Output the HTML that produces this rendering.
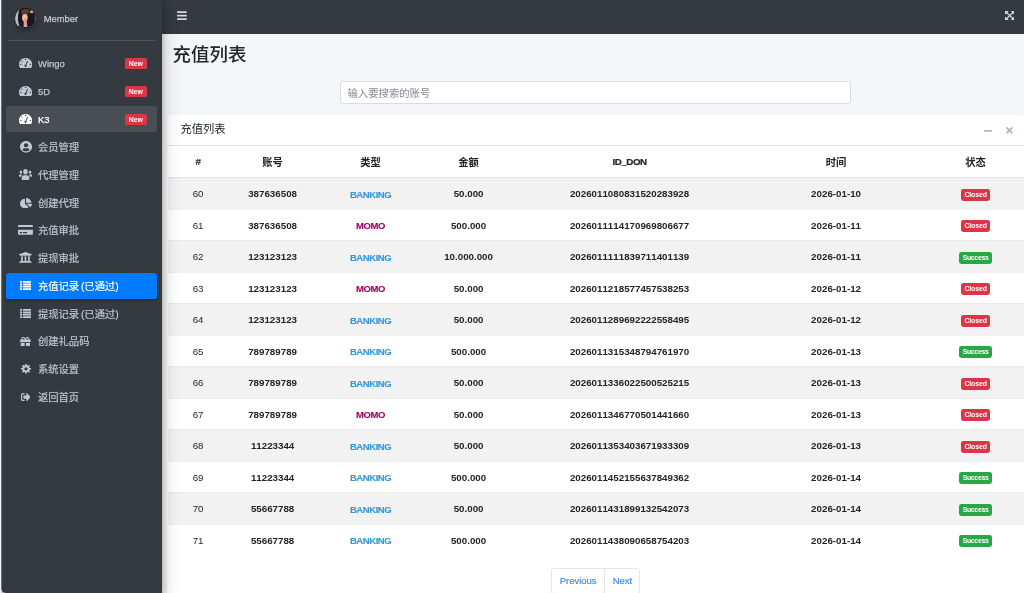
<!DOCTYPE html>
<html lang="zh">
<head>
<meta charset="utf-8">
<title>充值列表</title>
<style>
*{box-sizing:border-box}
html,body{margin:0;padding:0}
body{will-change:transform;width:1024px;height:593px;overflow:hidden;position:relative;background:#f4f6f9;
 font-family:"Liberation Sans","Noto Sans CJK SC",sans-serif;font-size:9.6px;color:#212529;line-height:1.5}
.cjk{font-size:10.3px}
/* window edge */
.edge{position:absolute;left:0;top:0;width:1px;height:593px;background:#f1f3f6;z-index:6}
.edge:after{content:"";position:absolute;left:1px;top:0;width:1px;height:593px;background:rgba(241,243,246,.3)}
/* sidebar */
.sidebar{position:absolute;left:1.4px;top:-2.7px;width:160.5px;height:595.7px;background:#343a40;z-index:5;
 border-bottom-left-radius:5px;box-shadow:0 9px 18px rgba(0,0,0,.25),0 6px 6px rgba(0,0,0,.22)}
.user{position:absolute;left:6.6px;right:5.8px;top:0;height:43.6px;border-bottom:.8px solid #4b545c}
.avatar{position:absolute;left:6.6px;top:10.5px;width:21.5px;height:21.5px;border-radius:50%;overflow:hidden;
 box-shadow:0 2px 4px rgba(0,0,0,.3)}
.user .name{position:absolute;left:35.8px;top:13.7px;font-size:9.4px;color:#c2c7d0;line-height:15px;-webkit-text-stroke:.25px currentColor}
.nav{position:absolute;left:5px;right:5px;top:53.6px;margin:0;padding:0;list-style:none}
.nav li{position:relative;height:26px;margin-bottom:1.75px;border-radius:2.6px;color:#c2c7d0;
 font-size:10.3px;line-height:25.7px;white-space:nowrap}
.nav li .t.ws{word-spacing:-1.1px}
.nav li.open{background:rgba(255,255,255,.1);color:#fff}
.nav li.active{background:#007bff;color:#fff;box-shadow:0 1px 3px rgba(0,0,0,.12),0 1px 2px rgba(0,0,0,.24)}
.nav li svg{position:absolute;fill:currentColor}
.nav li .t{position:absolute;left:31.6px;top:1px;-webkit-text-stroke:.18px currentColor}
.nav li .t.lat{font-size:9.45px;top:.2px;-webkit-text-stroke:.25px currentColor}
.nav li .b{position:absolute;right:10.3px;top:7.2px;height:11.4px;line-height:11.4px;width:21.5px;text-align:center;
 background:#dc3545;color:#fff;font-weight:bold;font-size:6.9px;border-radius:1.8px}
/* navbar */
.navbar{position:absolute;left:162px;top:-2.7px;right:0;height:36.6px;background:#343a40;z-index:2}
.navbar svg{position:absolute;fill:#d6d8da}
/* content */
h1{position:absolute;left:172.6px;top:40.7px;margin:0;font-size:18.45px;font-weight:500;line-height:27px;color:#212529;white-space:nowrap}
.search{position:absolute;left:340px;top:81px;width:511px;height:23px;background:#fff;border:1px solid #d8dce1;border-radius:2.6px;
 padding:0 6.5px;font-size:10.35px;line-height:23.6px;color:#858b91;white-space:nowrap}
.card{position:absolute;left:167px;top:115px;width:857.6px;height:500px;background:#fff;border-radius:2.6px 2.6px 0 0;
 box-shadow:0 0 1px rgba(0,0,0,.09),0 1px 2px rgba(0,0,0,.12)}
.card-h{position:relative;height:31px;border-bottom:1px solid #e3e5e8}
.card-h .ttl{position:absolute;left:13.4px;top:-.7px;line-height:30px;font-size:11.25px;color:#212529}
.card-h svg{position:absolute;fill:#b2b9c0}
table{border-collapse:collapse;table-layout:fixed;width:857.2px;margin-left:1px;text-align:center}
th,td{padding:0;overflow:hidden;white-space:nowrap;font-kerning:none}
thead th{height:31.6px;border-bottom:1px solid #dfe3e7;font-weight:bold;font-size:10.3px;color:#212529;padding-top:3px}
thead th.lat{font-size:9.8px;padding-top:2.1px;letter-spacing:-.45px;-webkit-text-stroke:.2px currentColor}
tbody td{height:31.51px;border-top:1px solid #e9ebec;font-weight:bold;font-size:9.75px;color:#212529;padding-top:2.8px}
tbody tr:nth-child(even) td{border-top-color:#eeeff0}
tbody tr:nth-child(odd){background:#f2f2f2}
tbody td.n{font-weight:normal;font-size:9.7px}
tbody td.bk,tbody td.mm{font-size:9.5px;letter-spacing:-.42px;-webkit-text-stroke:.12px currentColor}
.bk{color:#3498db}
.mm{color:#a50064}
.bd{display:inline-block;vertical-align:middle;height:12px;line-height:12px;padding:0;border-radius:2.4px;color:#fff;font-size:6.9px;font-weight:bold;position:relative;top:-.3px;text-align:center}
.bd.c{background:#dc3545;width:29.3px;letter-spacing:-.1px}
.bd.s{background:#28a745;width:33.1px;letter-spacing:-.3px}
.pg{position:absolute;left:551.4px;top:568px;height:26px;width:88.4px;background:#fff;border:1px solid #e4e7ea;border-radius:2.6px;z-index:3;
 font-size:9.5px;color:#3f8fe0;line-height:24px;-webkit-text-stroke:.2px currentColor}
.pg span{position:absolute;top:0;text-align:center}
.pg .p{left:0;width:52.5px;border-right:1px solid #e4e7ea;height:24px}
.pg .x{left:53px;width:34px;letter-spacing:-.1px}
</style>
</head>
<body>
<div class="edge"></div>

<div class="navbar">
 <svg style="left:15.2px;top:13.6px" width="9.8" height="9.2" viewBox="0 0 448 420"><path d="M16 40h416c9 0 16-7 16-16V-16c0-9-7-16-16-16H16C7-32 0-25 0-16v40c0 9 7 16 16 16zm0 160h416c9 0 16-7 16-16v-40c0-9-7-16-16-16H16c-9 0-16 7-16 16v40c0 9 7 16 16 16zm0 160h416c9 0 16-7 16-16v-40c0-9-7-16-16-16H16c-9 0-16 7-16 16v40c0 9 7 16 16 16z" transform="translate(0,46)"/></svg>
 <svg style="right:9.9px;top:13.5px" width="9.6" height="9.2" viewBox="0 0 448 448" preserveAspectRatio="none"><path d="M448 312v112c0 13-11 24-24 24H312c-21 0-32-26-17-41l36-36-107-107-107 107 36 36c15 15 4 41-17 41H24c-13 0-24-11-24-24V312c0-21 26-32 41-17l36 36 107-107L77 117l-36 36c-15 15-41 4-41-17V24C0 11 11 0 24 0h112c21 0 32 26 17 41l-36 36 107 107L331 77l-36-36c-15-15-4-41 17-41h112c13 0 24 11 24 24v112c0 21-26 32-41 17l-36-36-107 107 107 107 36-36c15-15 41-4 41 17z"/></svg>
</div>

<div class="sidebar">
 <div class="user">
  <div class="avatar"><svg width="21.5" height="21.5" viewBox="0 0 100 100"><defs><filter id="bl" x="-10%" y="-10%" width="120%" height="120%"><feGaussianBlur stdDeviation="3.6"/></filter></defs><rect width="100" height="100" fill="#1c1718"/><g filter="url(#bl)"><rect x="-10" y="-10" width="120" height="120" fill="#1c1718"/><path d="M-5 -5h30C12 25 10 60 22 85L-5 105z" fill="#b8bbb6"/><rect x="92" y="-5" width="15" height="70" fill="#5d6163"/><path d="M28 12C40 2 60 2 68 10L60 30 32 32z" fill="#5a3d30"/><ellipse cx="46" cy="45" rx="13" ry="17" fill="#ecbcae"/><path d="M40 58h14l4 30H40z" fill="#d9a092"/><ellipse cx="48" cy="53" rx="4" ry="2.5" fill="#c8606c"/><ellipse cx="78" cy="17" rx="9" ry="7" fill="#cf9aa2"/><path d="M5 84C30 80 40 94 50 94 66 94 82 78 96 62L105 105H-5z" fill="#1d3a84"/></g></svg></div>
  <div class="name">Member</div>
 </div>
 <ul class="nav" id="nav">
 <li><svg style="left:12.60px;top:7.55px" width="13.2" height="10.0" viewBox="0 32 576 448" preserveAspectRatio="none"><path fill-rule="evenodd" d="M288 32C129 32 0 161 0 320c0 52.800 14.300 102.300 39.100 144.800 5.600 9.600 16.300 15.200 27.400 15.200h443c11.100 0 21.800-5.600 27.400-15.200C561.800 422.300 576 372.800 576 320c0-159-129-288-288-288zM258 96a30 30 0 1 0 60 0a30 30 0 1 0 -60 0zM98 170a30 30 0 1 0 60 0a30 30 0 1 0 -60 0zM50 320a30 30 0 1 0 60 0a30 30 0 1 0 -60 0zM466 320a30 30 0 1 0 60 0a30 30 0 1 0 -60 0zM236 380a52 52 0 1 0 104 0a52 52 0 1 0 -104 0zM352 150l40 14-62 190-40-14z"/></svg><span class="t lat">Wingo</span><span class="b">New</span></li>
 <li><svg style="left:12.60px;top:7.55px" width="13.2" height="10.0" viewBox="0 32 576 448" preserveAspectRatio="none"><path fill-rule="evenodd" d="M288 32C129 32 0 161 0 320c0 52.800 14.300 102.300 39.100 144.800 5.600 9.600 16.300 15.200 27.400 15.200h443c11.100 0 21.800-5.600 27.400-15.200C561.800 422.300 576 372.800 576 320c0-159-129-288-288-288zM258 96a30 30 0 1 0 60 0a30 30 0 1 0 -60 0zM98 170a30 30 0 1 0 60 0a30 30 0 1 0 -60 0zM50 320a30 30 0 1 0 60 0a30 30 0 1 0 -60 0zM466 320a30 30 0 1 0 60 0a30 30 0 1 0 -60 0zM236 380a52 52 0 1 0 104 0a52 52 0 1 0 -104 0zM352 150l40 14-62 190-40-14z"/></svg><span class="t lat">5D</span><span class="b">New</span></li>
 <li class="open"><svg style="left:12.60px;top:7.55px" width="13.2" height="10.0" viewBox="0 32 576 448" preserveAspectRatio="none"><path fill-rule="evenodd" d="M288 32C129 32 0 161 0 320c0 52.800 14.300 102.300 39.100 144.800 5.600 9.600 16.300 15.200 27.400 15.200h443c11.100 0 21.800-5.600 27.400-15.200C561.800 422.300 576 372.800 576 320c0-159-129-288-288-288zM258 96a30 30 0 1 0 60 0a30 30 0 1 0 -60 0zM98 170a30 30 0 1 0 60 0a30 30 0 1 0 -60 0zM50 320a30 30 0 1 0 60 0a30 30 0 1 0 -60 0zM466 320a30 30 0 1 0 60 0a30 30 0 1 0 -60 0zM236 380a52 52 0 1 0 104 0a52 52 0 1 0 -104 0zM352 150l40 14-62 190-40-14z"/></svg><span class="t lat">K3</span><span class="b">New</span></li>
 <li><svg style="left:13.15px;top:7.05px" width="12.1" height="11.6" viewBox="0 8 496 496" preserveAspectRatio="none"><path fill-rule="evenodd" d="M248 8C111 8 0 119 0 256s111 248 248 248 248-111 248-248S385 8 248 8zM248 104a88 88 0 1 0 0 176 88 88 0 1 0 0-176zM248 448c-58 0-111-26-146-68 19-35 55-60 98-60 2 0 5 0 7 1 13 4 27 7 41 7s28-3 41-7c2-1 5-1 7-1 43 0 79 25 98 60-35 42-88 68-146 68z"/></svg><span class="t">会员管理</span></li>
 <li><svg style="left:12.70px;top:7.05px" width="13.0" height="10.9" viewBox="0 32 640 448" preserveAspectRatio="none"><path fill-rule="evenodd" d="M32 160a64 64 0 1 0 128 0a64 64 0 1 0 -128 0zM480 160a64 64 0 1 0 128 0a64 64 0 1 0 -128 0zM32 256h128c-30 22-48 58-48 96H32c-18 0-32-14-32-32v-32c0-18 14-32 32-32zM608 256H480c30 22 48 58 48 96h80c18 0 32-14 32-32v-32c0-18-14-32-32-32zM208 144a112 112 0 1 0 224 0a112 112 0 1 0 -224 0zM243 288h154c64 0 115 51 115 115v29c0 26-22 48-48 48H176c-26 0-48-22-48-48v-29c0-64 51-115 115-115z"/></svg><span class="t">代理管理</span></li>
 <li><svg style="left:13.15px;top:8.00px" width="12.1" height="10.3" viewBox="0 0 544 512" preserveAspectRatio="none"><path fill-rule="evenodd" d="M527.800 288H290.500l158 158c6 6 16 6.500 22.200.700 38.700-36.500 65.300-85.600 73.100-140.900C545.200 296.400 537.400 288 527.800 288zM512 223.200C503.700 103.700 408.300 8.300 288.800 0 279.700-.600 272 7.100 272 16.200V240h223.800c9.100 0 16.800-7.700 16.200-16.800zM224 288V50.700c0-9.600-8.400-17.400-17.800-16C87 51.500-4.100 155.600.100 280.400 4.500 408.500 114.800 513.600 243 512c50.400-.600 97-16.900 135.300-44 7.900-5.600 8.400-17.200 1.600-24L224 288z"/></svg><span class="t">创建代理</span></li>
 <li><svg style="left:11.75px;top:7.75px" width="14.9" height="9.7" viewBox="0 32 576 448" preserveAspectRatio="none"><path fill-rule="evenodd" d="M0 432c0 26.500 21.500 48 48 48h480c26.500 0 48-21.500 48-48V256H0v176zm192-68c0-6.600 5.400-12 12-12h136c6.600 0 12 5.400 12 12v40c0 6.600-5.400 12-12 12H204c-6.600 0-12-5.400-12-12v-40zm-128 0c0-6.600 5.400-12 12-12h72c6.600 0 12 5.400 12 12v40c0 6.600-5.400 12-12 12H76c-6.600 0-12-5.400-12-12v-40zM576 80v48H0V80c0-26.500 21.500-48 48-48h480c26.500 0 48 21.500 48 48z"/></svg><span class="t">充值审批</span></li>
 <li><svg style="left:12.75px;top:6.55px" width="12.9" height="11.6" viewBox="16 32 480 448" preserveAspectRatio="none"><path fill-rule="evenodd" d="M496 128v16a8 8 0 0 1-8 8h-24v12c0 6.600-5.400 12-12 12H60c-6.600 0-12-5.400-12-12v-12H24a8 8 0 0 1-8-8v-16a8 8 0 0 1 4.900-7.400l232-88a8 8 0 0 1 6.200 0l232 88A8 8 0 0 1 496 128zM472 432H40c-13.300 0-24 10.700-24 24v16a8 8 0 0 0 8 8h464a8 8 0 0 0 8-8v-16c0-13.300-10.700-24-24-24zM96 192v192H60c-6.600 0-12 5.400-12 12v20h416v-20c0-6.600-5.400-12-12-12h-36V192h-64v192h-64V192h-64v192h-64V192H96z"/></svg><span class="t">提现审批</span></li>
 <li class="active"><svg style="left:13.60px;top:7.85px" width="11.2" height="9.0" viewBox="0 0 512 416" preserveAspectRatio="none"><path fill-rule="evenodd" d="M10 0h80a10 10 0 0 1 10 10v60a10 10 0 0 1 -10 10h-80a10 10 0 0 1 -10 -10v-60a10 10 0 0 1 10 -10zM146 0h356a10 10 0 0 1 10 10v60a10 10 0 0 1 -10 10h-356a10 10 0 0 1 -10 -10v-60a10 10 0 0 1 10 -10zM10 112h80a10 10 0 0 1 10 10v60a10 10 0 0 1 -10 10h-80a10 10 0 0 1 -10 -10v-60a10 10 0 0 1 10 -10zM146 112h356a10 10 0 0 1 10 10v60a10 10 0 0 1 -10 10h-356a10 10 0 0 1 -10 -10v-60a10 10 0 0 1 10 -10zM10 224h80a10 10 0 0 1 10 10v60a10 10 0 0 1 -10 10h-80a10 10 0 0 1 -10 -10v-60a10 10 0 0 1 10 -10zM146 224h356a10 10 0 0 1 10 10v60a10 10 0 0 1 -10 10h-356a10 10 0 0 1 -10 -10v-60a10 10 0 0 1 10 -10zM10 336h80a10 10 0 0 1 10 10v60a10 10 0 0 1 -10 10h-80a10 10 0 0 1 -10 -10v-60a10 10 0 0 1 10 -10zM146 336h356a10 10 0 0 1 10 10v60a10 10 0 0 1 -10 10h-356a10 10 0 0 1 -10 -10v-60a10 10 0 0 1 10 -10z"/></svg><span class="t ws">充值记录 (已通过)</span></li>
 <li><svg style="left:13.60px;top:7.85px" width="11.2" height="9.0" viewBox="0 0 512 416" preserveAspectRatio="none"><path fill-rule="evenodd" d="M10 0h80a10 10 0 0 1 10 10v60a10 10 0 0 1 -10 10h-80a10 10 0 0 1 -10 -10v-60a10 10 0 0 1 10 -10zM146 0h356a10 10 0 0 1 10 10v60a10 10 0 0 1 -10 10h-356a10 10 0 0 1 -10 -10v-60a10 10 0 0 1 10 -10zM10 112h80a10 10 0 0 1 10 10v60a10 10 0 0 1 -10 10h-80a10 10 0 0 1 -10 -10v-60a10 10 0 0 1 10 -10zM146 112h356a10 10 0 0 1 10 10v60a10 10 0 0 1 -10 10h-356a10 10 0 0 1 -10 -10v-60a10 10 0 0 1 10 -10zM10 224h80a10 10 0 0 1 10 10v60a10 10 0 0 1 -10 10h-80a10 10 0 0 1 -10 -10v-60a10 10 0 0 1 10 -10zM146 224h356a10 10 0 0 1 10 10v60a10 10 0 0 1 -10 10h-356a10 10 0 0 1 -10 -10v-60a10 10 0 0 1 10 -10zM10 336h80a10 10 0 0 1 10 10v60a10 10 0 0 1 -10 10h-80a10 10 0 0 1 -10 -10v-60a10 10 0 0 1 10 -10zM146 336h356a10 10 0 0 1 10 10v60a10 10 0 0 1 -10 10h-356a10 10 0 0 1 -10 -10v-60a10 10 0 0 1 10 -10z"/></svg><span class="t ws">提现记录 (已通过)</span></li>
 <li><svg style="left:13.85px;top:8.25px" width="10.7" height="8.9" viewBox="0 32 512 448" preserveAspectRatio="none"><path fill-rule="evenodd" d="M32 448c0 17.700 14.300 32 32 32h160V320H32v128zM288 480h160c17.700 0 32-14.300 32-32V320H288v160zM480 160h-42.100c6.200-12.100 10.100-25.500 10.100-40 0-48.500-39.500-88-88-88-41.600 0-68.500 21.300-103 68.300-34.500-47-61.400-68.300-103-68.300-48.500 0-88 39.500-88 88 0 14.500 3.800 27.900 10.100 40H32c-17.700 0-32 14.300-32 32v80c0 8.800 7.200 16 16 16h480c8.800 0 16-7.200 16-16v-80c0-17.700-14.300-32-32-32zM153.900 160c-22.100 0-40-17.900-40-40s17.900-40 40-40c19.900 0 34.600 3.300 86.100 80h-86.100zM360 160h-86.100c51.400-76.500 65.700-80 86.100-80 22.100 0 40 17.900 40 40s-17.900 40-40 40z"/></svg><span class="t">创建礼品码</span></li>
 <li><svg style="left:14.20px;top:8.05px" width="10.0" height="9.6" viewBox="6 6 500 500" preserveAspectRatio="none"><path fill-rule="evenodd" d="M213.0 9.7L299.0 9.7L299.2 76.1L352.7 98.3L399.8 51.5L460.5 112.2L413.7 159.3L435.9 212.8L502.3 213.0L502.3 299.0L435.9 299.2L413.7 352.7L460.5 399.8L399.8 460.5L352.7 413.7L299.2 435.9L299.0 502.3L213.0 502.3L212.8 435.9L159.3 413.7L112.2 460.5L51.5 399.8L98.3 352.7L76.1 299.2L9.7 299.0L9.7 213.0L76.1 212.8L98.3 159.3L51.5 112.2L112.2 51.5L159.3 98.3L212.8 76.1zM171 256a85 85 0 1 0 170 0a85 85 0 1 0 -170 0z"/></svg><span class="t">系统设置</span></li>
 <li><svg style="left:14.40px;top:8.75px" width="9.6" height="8.2" viewBox="0 64 512 384" preserveAspectRatio="none"><path fill-rule="evenodd" d="M497 273L329 441c-15 15-41 4.500-41-17v-96H152c-13.300 0-24-10.700-24-24v-96c0-13.300 10.700-24 24-24h136V88c0-21.400 25.900-32 41-17l168 168c9.300 9.400 9.300 24.600 0 34zM192 436v-40c0-6.600-5.400-12-12-12H96c-17.700 0-32-14.300-32-32V160c0-17.700 14.300-32 32-32h84c6.600 0 12-5.400 12-12V76c0-6.600-5.400-12-12-12H96c-53 0-96 43-96 96v192c0 53 43 96 96 96h84c6.600 0 12-5.400 12-12z"/></svg><span class="t">返回首页</span></li>
 </ul>
</div>

<h1>充值列表</h1>
<div class="search">输入要搜索的账号</div>

<div class="card">
 <div class="card-h">
  <span class="ttl">充值列表</span>
  <svg style="left:817.1px;top:15px" width="8.4" height="1.8" viewBox="0 0 10 2"><rect width="10" height="2" rx=".6"/></svg>
  <svg style="left:838.8px;top:12.4px" width="6.8" height="6.8" viewBox="0 0 352 352"><path d="M242.700 176l100.100-100.100c12.300-12.300 12.300-32.200 0-44.500l-22.200-22.200c-12.300-12.300-32.200-12.300-44.500 0L176 109.300 75.900 9.200C63.600-3.100 43.700-3.100 31.400 9.200L9.200 31.400c-12.300 12.300-12.300 32.200 0 44.500L109.300 176 9.200 276.100c-12.300 12.300-12.300 32.200 0 44.500l22.200 22.200c12.300 12.300 32.200 12.300 44.500 0L176 242.700l100.100 100.100c12.300 12.300 32.200 12.300 44.500 0l22.200-22.200c12.300-12.300 12.300-32.200 0-44.500L242.700 176z"/></svg>
 </div>
 <table>
  <colgroup><col style="width:60.2px"><col style="width:88.8px"><col style="width:107.2px"><col style="width:88.8px"><col style="width:233.2px"><col style="width:179.8px"><col style="width:99.2px"></colgroup>
  <thead><tr><th class="lat">#</th><th>账号</th><th>类型</th><th>金额</th><th class="lat">ID_DON</th><th>时间</th><th>状态</th></tr></thead>
  <tbody>
   <tr><td class="n">60</td><td>387636508</td><td class="bk">BANKING</td><td>50.000</td><td>2026011080831520283928</td><td>2026-01-10</td><td><span class="bd c">Closed</span></td></tr>
   <tr><td class="n">61</td><td>387636508</td><td class="mm">MOMO</td><td>500.000</td><td>2026011114170969806677</td><td>2026-01-11</td><td><span class="bd c">Closed</span></td></tr>
   <tr><td class="n">62</td><td>123123123</td><td class="bk">BANKING</td><td>10.000.000</td><td>2026011111839711401139</td><td>2026-01-11</td><td><span class="bd s">Success</span></td></tr>
   <tr><td class="n">63</td><td>123123123</td><td class="mm">MOMO</td><td>50.000</td><td>2026011218577457538253</td><td>2026-01-12</td><td><span class="bd c">Closed</span></td></tr>
   <tr><td class="n">64</td><td>123123123</td><td class="bk">BANKING</td><td>50.000</td><td>2026011289692222558495</td><td>2026-01-12</td><td><span class="bd c">Closed</span></td></tr>
   <tr><td class="n">65</td><td>789789789</td><td class="bk">BANKING</td><td>500.000</td><td>2026011315348794761970</td><td>2026-01-13</td><td><span class="bd s">Success</span></td></tr>
   <tr><td class="n">66</td><td>789789789</td><td class="bk">BANKING</td><td>50.000</td><td>2026011336022500525215</td><td>2026-01-13</td><td><span class="bd c">Closed</span></td></tr>
   <tr><td class="n">67</td><td>789789789</td><td class="mm">MOMO</td><td>50.000</td><td>2026011346770501441660</td><td>2026-01-13</td><td><span class="bd c">Closed</span></td></tr>
   <tr><td class="n">68</td><td>11223344</td><td class="bk">BANKING</td><td>50.000</td><td>2026011353403671933309</td><td>2026-01-13</td><td><span class="bd c">Closed</span></td></tr>
   <tr><td class="n">69</td><td>11223344</td><td class="bk">BANKING</td><td>500.000</td><td>2026011452155637849362</td><td>2026-01-14</td><td><span class="bd s">Success</span></td></tr>
   <tr><td class="n">70</td><td>55667788</td><td class="bk">BANKING</td><td>50.000</td><td>2026011431899132542073</td><td>2026-01-14</td><td><span class="bd s">Success</span></td></tr>
   <tr><td class="n">71</td><td>55667788</td><td class="bk">BANKING</td><td>500.000</td><td>2026011438090658754203</td><td>2026-01-14</td><td><span class="bd s">Success</span></td></tr>
  </tbody>
 </table>
</div>

<div class="pg"><span class="p">Previous</span><span class="x">Next</span></div>
</body>
</html>
